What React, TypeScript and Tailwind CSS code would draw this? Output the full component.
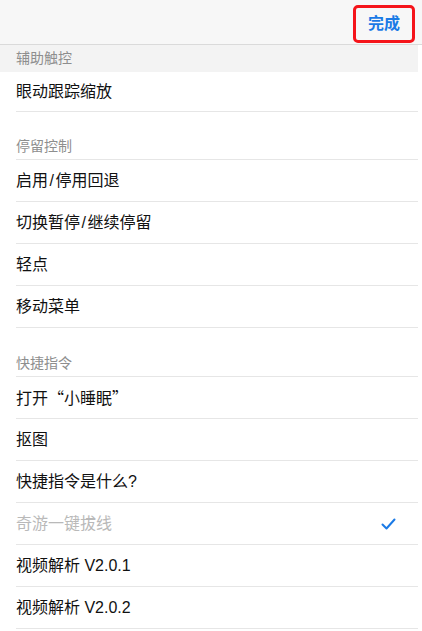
const font = "font-['Liberation_Sans','Noto_Sans_CJK_SC',sans-serif]";

type Item = { label: React.ReactNode; disabled?: boolean; checked?: boolean };

const Row = ({ item, first }: { item: Item; first?: boolean }) => (
  <div className="pl-4 pr-[4px]">
    <div
      className={`${first ? 'h-[40px]' : 'h-[42px]'} flex items-center justify-between border-b border-[#e6e6e6] pr-[22px]`}
    >
      <span className={`text-[16px] ${item.disabled ? 'text-[#b9b9b9]' : 'text-[#111]'}`}>{item.label}</span>
      {item.checked && (
        <svg width="15" height="12" viewBox="0 0 15 12" fill="none">
          <path d="M1.5 6.5 L5.5 10.5 L13.5 1.5" stroke="#1a7ae6" strokeWidth="2" strokeLinecap="round" strokeLinejoin="round" />
        </svg>
      )}
    </div>
  </div>
);

const SectionTitle = ({ title, h }: { title: string; h: string }) => (
  <div className="pl-4 pr-[4px]">
    <div className={`${h} flex items-end pb-[3px] border-b border-[#e6e6e6]`}>
      <span className="text-[14px] leading-5 text-[#8e8e8e]">{title}</span>
    </div>
  </div>
);

const Slash = () => <span className="px-[1.5px]">/</span>;

export default function App() {
  const dwell: Item[] = [
    { label: <>启用<Slash />停用回退</> },
    { label: <>切换暂停<Slash />继续停留</> },
    { label: '轻点' },
    { label: '移动菜单' },
  ];
  const shortcuts: Item[] = [
    {
      label: (
        <>
          打开<span className="font-['Noto_Sans_CJK_SC',sans-serif]">“小睡眠”</span>
        </>
      ),
    },
    { label: '抠图' },
    { label: '快捷指令是什么?' },
    { label: '奇游一键拔线', disabled: true, checked: true },
    { label: '视频解析 V2.0.1' },
    { label: '视频解析 V2.0.2' },
  ];

  return (
    <div className={`w-[422px] h-[631px] bg-white overflow-hidden ${font}`}>
      <div className="h-[45px] bg-[#f7f7f7] border-b border-[#dadada] flex items-start justify-end pr-[7px] pt-[5px]">
        <button className="w-[62px] h-[38px] border-[3px] border-[#f5141a] rounded-[5px] flex items-center justify-center text-[16px] font-bold text-[#1a7ae6]">
          完成
        </button>
      </div>

      <div className="h-[27px] bg-[#f3f3f3] mr-[4px] pl-4 flex items-center">
        <span className="text-[14px] text-[#8e8e8e]">辅助触控</span>
      </div>
      <Row item={{ label: '眼动跟踪缩放' }} first />

      <SectionTitle title="停留控制" h="h-[48px]" />
      {dwell.map((it, i) => (
        <Row key={i} item={it} />
      ))}

      <SectionTitle title="快捷指令" h="h-[49px]" />
      {shortcuts.map((it, i) => (
        <Row key={i} item={it} />
      ))}
    </div>
  );
}
